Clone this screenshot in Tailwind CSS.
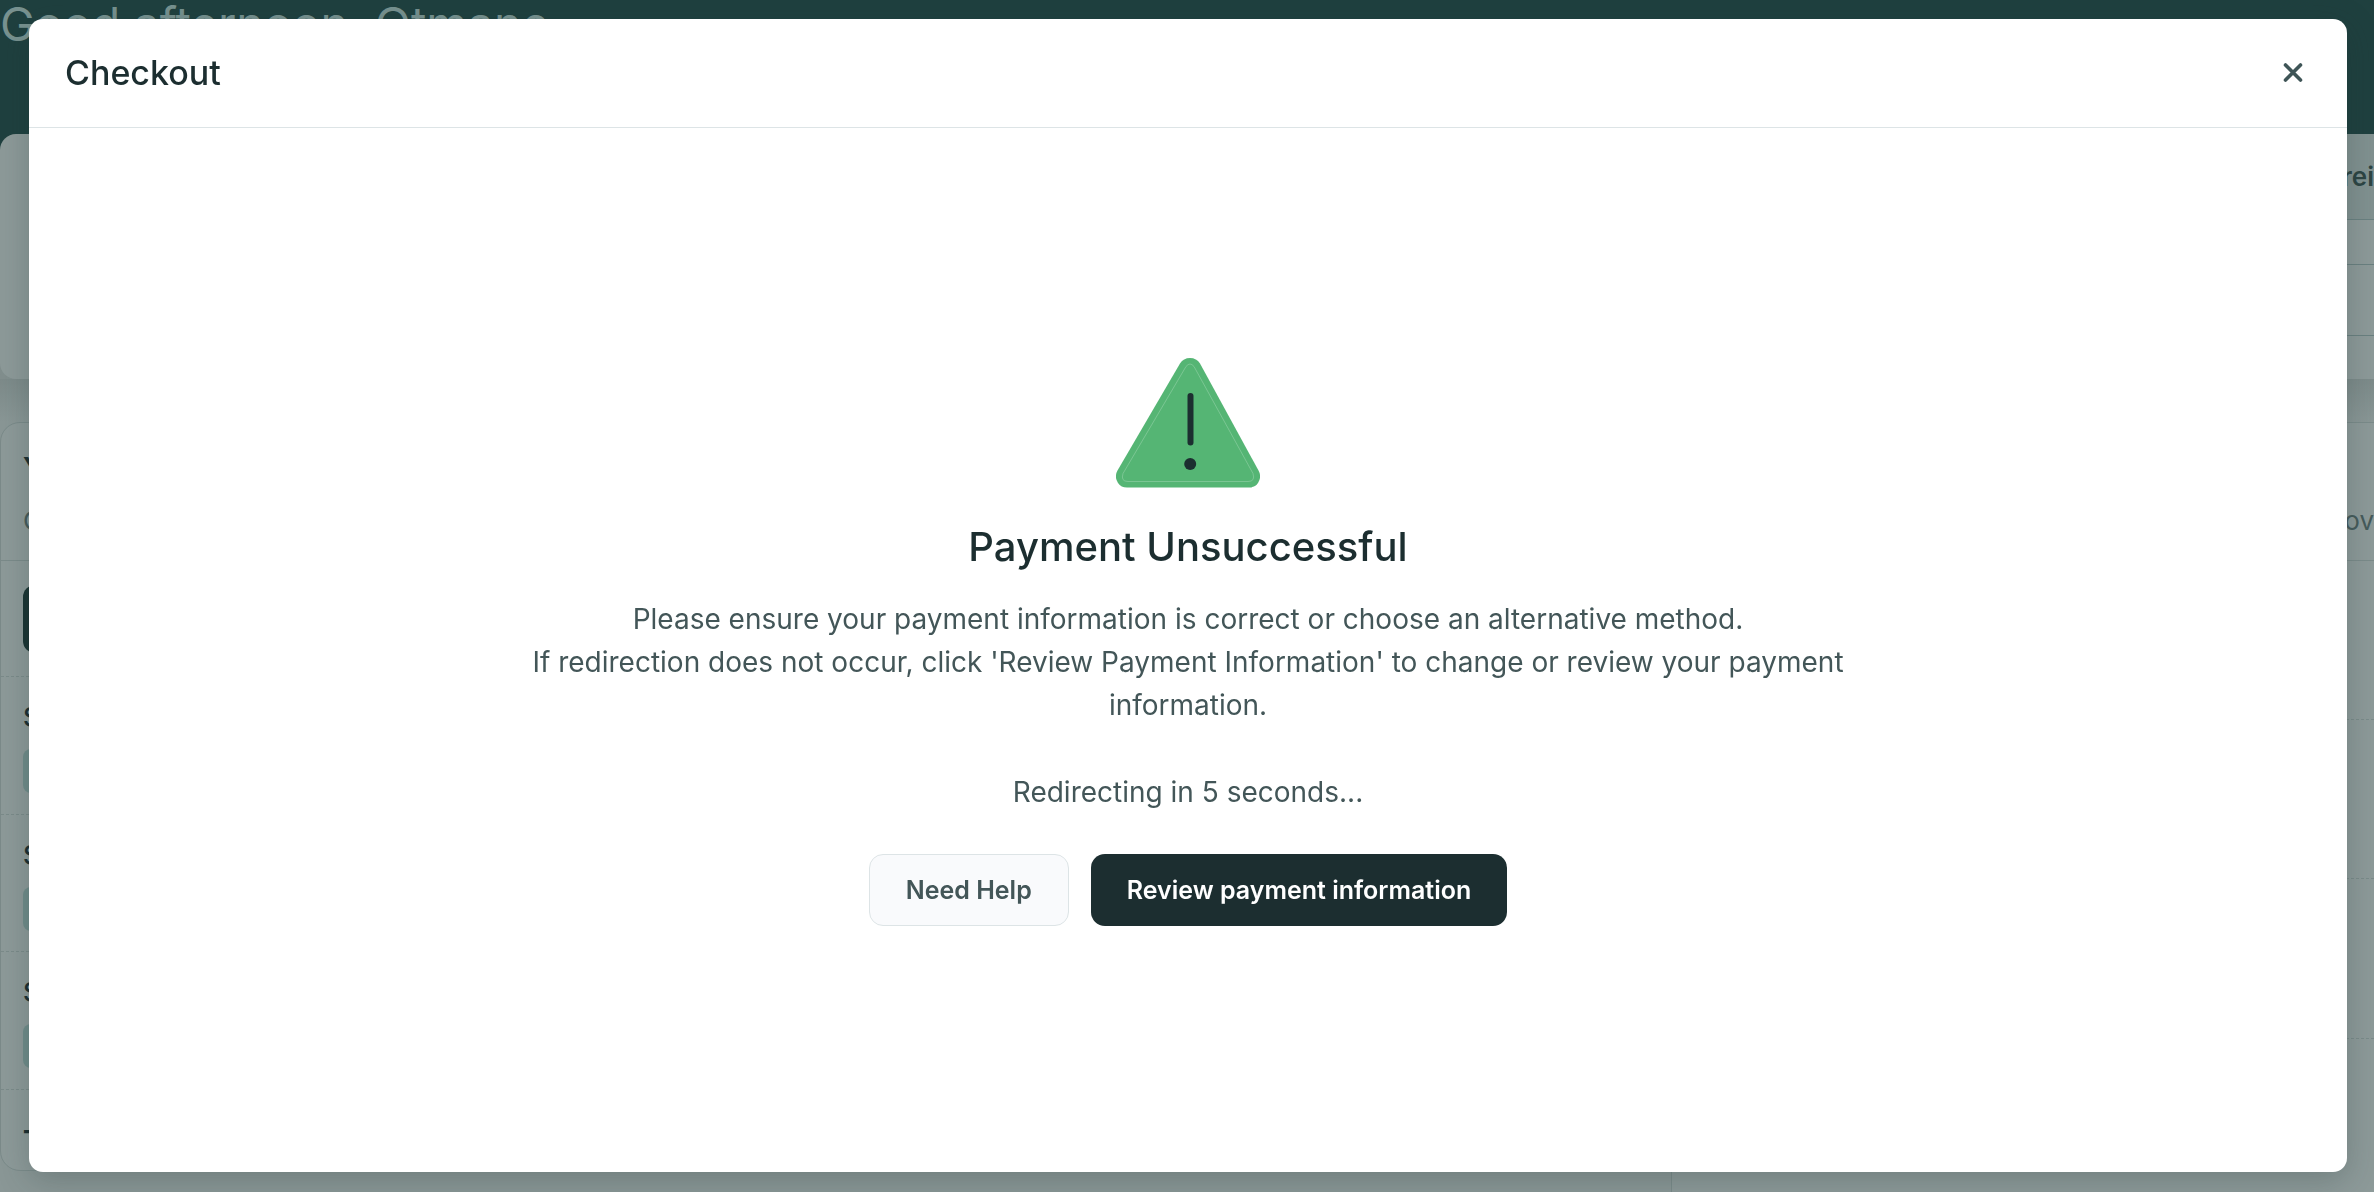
<!DOCTYPE html>
<html lang="en">
<head>
    <meta charset="UTF-8">
    <meta name="viewport" content="width=device-width, initial-scale=1.0">
    <script src="https://cdn.jsdelivr.net/npm/@tailwindcss/browser@4"></script>
    <title>Checkout</title>
</head>
<body class="h-screen overflow-hidden bg-[#8a9796] font-['Inter',sans-serif] text-[#1c2e30]">
    <!-- Page behind the dialog -->
    <main class="h-screen overflow-hidden" aria-hidden="true">
        <div class="h-[134px] bg-[#1f403f]">
            <p class="text-[47px] leading-[48px] text-[#789290]">Good afternoon, Otmane</p>
        </div>
        <div class="bg-linear-to-b from-[#1f403f] from-50% to-[#828f8e] to-50%">
            <section class="h-[245px] rounded-l-2xl bg-[#8d9a99] overflow-hidden flex justify-end">
                <div class="w-1/2">
                    <div class="h-[86px] flex items-center justify-end bg-[#819190] border-b border-[#6a8080] text-[26px] font-semibold text-[#2d4544]">rei</div>
                    <div class="h-[45px] border-b border-[#6a8080]"></div>
                    <div class="h-[71px] border-b border-[#6a8080]"></div>
                </div>
            </section>
        </div>
        <div class="h-[43px] bg-linear-to-b from-[#7d8b8a] to-[#8a9796]"></div>
        <div class="flex items-start gap-8">
            <section class="flex-1 rounded-[20px] border border-[#7b8b8a] bg-[#8d9a99]">
                <div class="h-[138px] border-b border-[#7b8b8a] px-[22px] pt-6 text-[26px]">
                    <p class="font-bold leading-10">Y</p>
                    <p class="pt-4 leading-9 text-[#465b5b]">C</p>
                </div>
                <div class="h-[116px] border-b border-dashed border-[#7b8b8a] px-[22px] pt-6">
                    <div class="h-[68px] w-40 rounded-xl bg-[#1a3433]"></div>
                </div>
                <div class="h-[138px] border-b border-dashed border-[#7b8b8a] px-[22px] pt-6 text-[26px] font-medium">
                    <p class="leading-8">S</p>
                    <div class="mt-4 h-11 w-32 rounded-lg bg-[#708c8a]"></div>
                </div>
                <div class="h-[137px] border-b border-dashed border-[#7b8b8a] px-[22px] pt-6 text-[26px] font-medium">
                    <p class="leading-8">S</p>
                    <div class="mt-4 h-11 w-32 rounded-lg bg-[#708c8a]"></div>
                </div>
                <div class="h-[138px] border-b border-dashed border-[#7b8b8a] px-[22px] pt-6 text-[26px] font-medium">
                    <p class="leading-8">S</p>
                    <div class="mt-4 h-11 w-32 rounded-lg bg-[#708c8a]"></div>
                </div>
                <div class="h-[80px] px-[22px] pt-[34px] text-[26px] font-bold leading-8">T</div>
            </section>
            <section class="w-[703px] h-[900px] rounded-tl-[20px] border-t border-l border-[#7b8b8a] bg-[#8d9a99]">
                <div class="h-[138px] border-b border-[#7b8b8a] pt-20 text-right text-[26px] leading-9 text-[#465b5b]">nov</div>
                <div class="h-[159px] border-b border-dashed border-[#7b8b8a]"></div>
                <div class="h-[159px] border-b border-dashed border-[#7b8b8a]"></div>
                <div class="h-[160px] border-b border-dashed border-[#7b8b8a]"></div>
            </section>
        </div>
    </main>

    <!-- Checkout dialog -->
    <div class="fixed inset-0 flex pt-[19px] pr-[27px] pb-5 pl-[29px]">
        <div role="dialog" aria-labelledby="dialog-title" class="flex-1 flex flex-col rounded-[14px] bg-white shadow-[0_8px_32px_rgba(28,46,48,0.25)]">
            <header class="flex items-center justify-between h-[109px] px-9 border-b border-[#dde4e6]">
                <h1 id="dialog-title" class="text-[34px] leading-10 font-medium">Checkout</h1>
                <button type="button" aria-label="Close" class="size-9 flex items-center justify-center text-[#3f5557]">
                    <svg class="size-5" viewBox="0 0 20 20" fill="none" stroke="currentColor" stroke-width="3.6" stroke-linecap="round">
                        <path d="M2.500 2l15 15M17.500 2l-15 15"/>
                    </svg>
                </button>
            </header>
            <div class="flex-1 flex flex-col items-center justify-center pb-4 text-center">
                <svg class="w-36 h-[130px]" viewBox="0 0 144 130">
                    <path d="M64 5.500Q67.500 0 74 0Q80.500 0 84 5.500L142.500 112.500Q146 119 142 125Q139 129.500 133 129.500H11Q5 129.500 2 125Q-2 119 1.500 112.500Z" fill="#55b574"/>
                    <path d="M70 8.500Q74 3.500 78 8.500L137 115.500Q139.500 123.500 132 123.500H12Q4.500 123.500 7 115.500Z" fill="none" stroke="#84ca9b" stroke-width="0.800"/>
                    <path d="M74.500 38V84.500" stroke="#1c2e30" stroke-width="6" stroke-linecap="round"/>
                    <circle cx="74.200" cy="106" r="6" fill="#1c2e30"/>
                </svg>
                <h2 class="mt-8 text-[40px] leading-[54px] font-medium">Payment Unsuccessful</h2>
                <p class="mt-6 max-w-[1340px] text-[28px] leading-[43px] text-[#435658]">
                    Please ensure your payment information is correct or choose an alternative method.<br>
                    If redirection does not occur, click 'Review Payment Information' to change or review your payment information.
                </p>
                <p class="mt-11 text-[28px] leading-[43px] text-[#435658]">Redirecting in 5 seconds...</p>
                <div class="mt-10 flex gap-[22px] text-[25px] leading-8 font-semibold">
                    <button type="button" class="h-[72px] px-9 rounded-[14px] border border-[#dde4e6] bg-[#f9fafc] text-[#435658]">Need Help</button>
                    <button type="button" class="h-[72px] px-9 rounded-[14px] bg-[#1c2e30] text-white">Review payment information</button>
                </div>
            </div>
        </div>
    </div>
</body>
</html>
